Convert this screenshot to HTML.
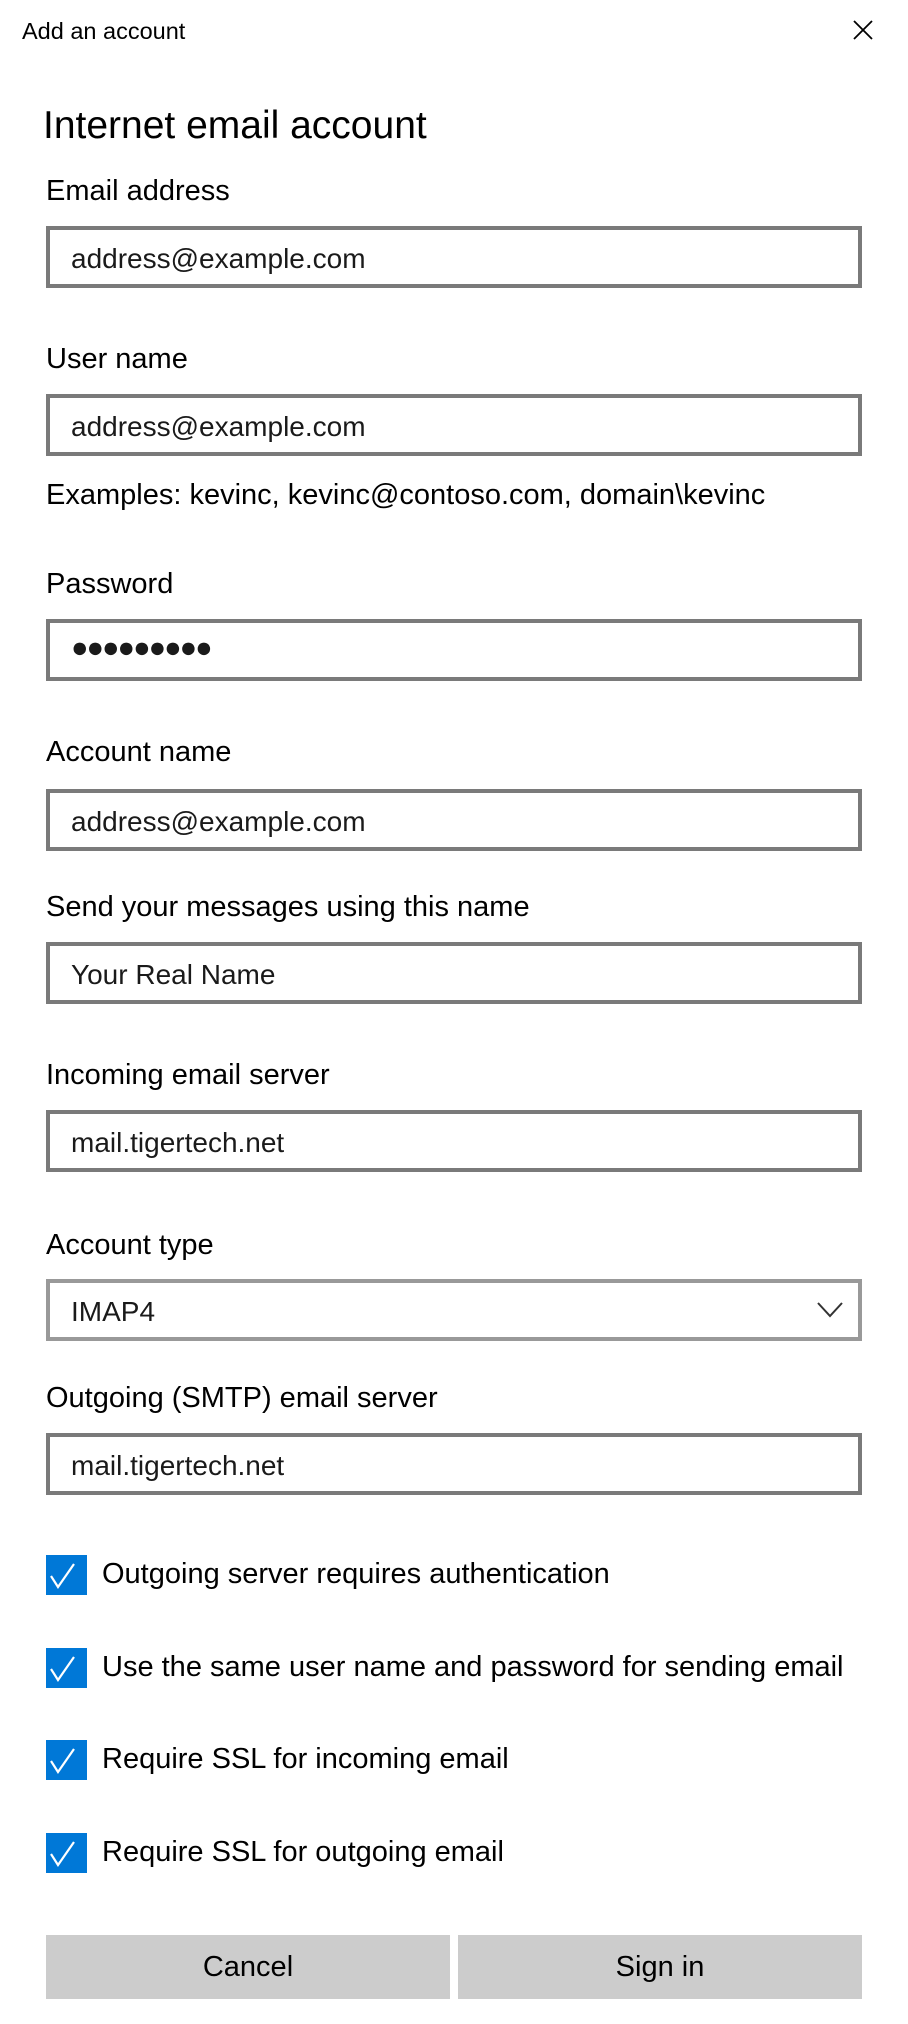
<!DOCTYPE html>
<html><head><meta charset="utf-8"><style>
*{margin:0;padding:0;box-sizing:border-box}
body{width:908px;height:2024px;background:#fff;position:relative;font-family:"Liberation Sans",sans-serif;color:#000;overflow:hidden}
.t{position:absolute;white-space:nowrap;line-height:1}
.lbl{font-size:29px;left:46px}
.box{position:absolute;left:46px;width:816px;height:62px;border:4px solid #7a7a7a;background:#fff}
.box span{position:absolute;left:21px;top:13px;font-size:28px;color:#1a1a1a;white-space:nowrap}
.cb{position:absolute;left:46px;width:41px;height:40px;background:#0078d7}
.cbt{font-size:29px;left:102px}
.btn{position:absolute;top:1935px;height:64px;width:404px;background:#ccc;font-size:29px;text-align:center;line-height:64px}
</style></head><body>
<div class="t" style="left:22px;top:20px;font-size:23.5px">Add an account</div>
<svg style="position:absolute;left:853px;top:20px" width="20" height="20" viewBox="0 0 20 20"><path d="M1 1L19 19M19 1L1 19" stroke="#000" stroke-width="1.8"/></svg>
<div class="t" style="left:43px;top:106px;font-size:39px">Internet email account</div>

<div class="t lbl" style="top:177px">Email address</div>
<div class="box" style="top:226px"><span>address@example.com</span></div>

<div class="t lbl" style="top:345px">User name</div>
<div class="box" style="top:394px"><span>address@example.com</span></div>
<div class="t lbl" style="top:481px">Examples: kevinc, kevinc@contoso.com, domain\kevinc</div>

<div class="t lbl" style="top:570px">Password</div>
<div class="box" style="top:619px"><span style="top:9px;font-size:29px;letter-spacing:-2px">●●●●●●●●●</span></div>

<div class="t lbl" style="top:738px">Account name</div>
<div class="box" style="top:789px"><span>address@example.com</span></div>

<div class="t lbl" style="top:893px">Send your messages using this name</div>
<div class="box" style="top:942px"><span>Your Real Name</span></div>

<div class="t lbl" style="top:1061px">Incoming email server</div>
<div class="box" style="top:1110px"><span>mail.tigertech.net</span></div>

<div class="t lbl" style="top:1231px">Account type</div>
<div class="box" style="top:1279px;border-color:#999"><span>IMAP4</span></div>
<svg style="position:absolute;left:816px;top:1300px" width="28" height="20" viewBox="0 0 28 20"><path d="M2 3L14 16L26 3" fill="none" stroke="#333" stroke-width="2"/></svg>

<div class="t lbl" style="top:1384px">Outgoing (SMTP) email server</div>
<div class="box" style="top:1433px"><span>mail.tigertech.net</span></div>

<div class="cb" style="top:1555px"></div>
<div class="cb" style="top:1648px"></div>
<div class="cb" style="top:1740px"></div>
<div class="cb" style="top:1833px"></div>
<svg style="position:absolute;left:46px;top:1555px" width="41" height="320" viewBox="0 0 41 320">
<g fill="none" stroke="#fff" stroke-width="2.2">
<path d="M5 21L12 32L28 9"/>
<path d="M5 114L12 125L28 102"/>
<path d="M5 206L12 217L28 194"/>
<path d="M5 299L12 310L28 287"/>
</g></svg>
<div class="t cbt" style="top:1560px">Outgoing server requires authentication</div>
<div class="t cbt" style="top:1653px">Use the same user name and password for sending email</div>
<div class="t cbt" style="top:1745px">Require SSL for incoming email</div>
<div class="t cbt" style="top:1838px">Require SSL for outgoing email</div>

<div class="btn" style="left:46px">Cancel</div>
<div class="btn" style="left:458px">Sign in</div>
</body></html>
